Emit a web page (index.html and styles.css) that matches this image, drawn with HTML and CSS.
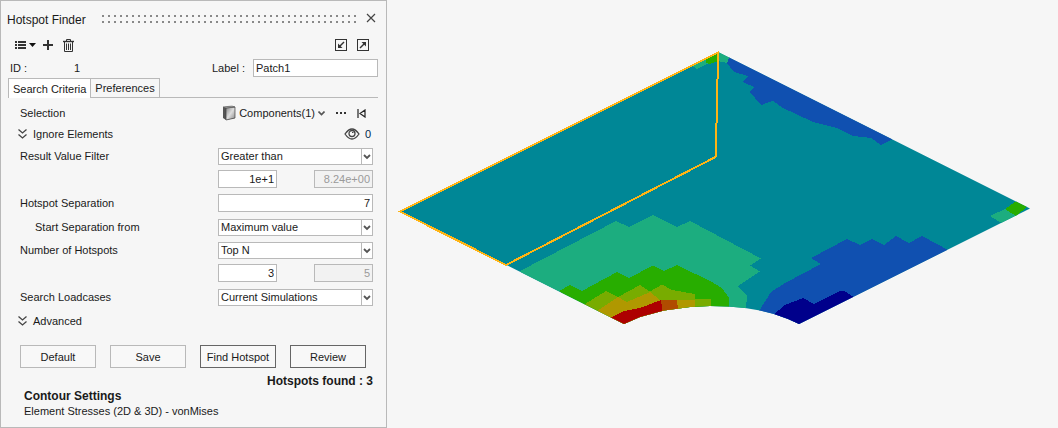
FILE: index.html
```html
<!DOCTYPE html>
<html lang="en">
<head>
  <meta charset="UTF-8" />
  <meta name="viewport" content="width=device-width, initial-scale=1.0"/>
  <title>Hotspot Finder</title>
  <link rel="stylesheet" href="styles.css">
</head>
<body>

  <form class="panel">
    <div class="title-bar">
      <h1>Hotspot Finder</h1>
      <div class="grip"></div>
      <button type="button" class="icon-btn" aria-label="Close">
        <svg width="10" height="10" viewBox="0 0 10 10"><path d="M1 1L9 9M9 1L1 9" stroke="#444" stroke-width="1.2"/></svg>
      </button>
    </div>

    <div class="toolbar">
      <button type="button" class="icon-btn" aria-label="List">
        <svg width="22" height="12" viewBox="0 0 22 12" fill="#333">
          <path d="M0 2h2v2H0zM3 2h8v2H3zM0 5h2v2H0zM3 5h8v2H3zM0 8h2v2H0zM3 8h8v2H3z"/>
          <path d="M14 4h7l-3.5 4z" fill="#111"/>
        </svg>
      </button>
      <button type="button" class="icon-btn" aria-label="Add">
        <svg width="10" height="10" viewBox="0 0 10 10" fill="#333"><path d="M4 0h2v4h4v2H6v4H4V6H0V4h4z"/></svg>
      </button>
      <button type="button" class="icon-btn" aria-label="Delete">
        <svg width="11" height="13" viewBox="0 0 11 13" fill="none" stroke="#333">
          <path d="M3.5 2V.5h4V2"/><path d="M0 2.5h11" stroke-width="1.4"/>
          <path d="M1.5 3v9.5h8V3M3.5 4.5V11M5.5 4.5V11M7.5 4.5V11"/>
        </svg>
      </button>
      <span class="spacer"></span>
      <button type="button" class="icon-btn" aria-label="Collapse">
        <svg width="12" height="12" viewBox="0 0 12 12" fill="none" stroke="#333">
          <rect x=".5" y=".5" width="11" height="11"/><path d="M9 3L4 8" stroke-width="1.5"/><path d="M3 4.5V9h4.5z" fill="#333" stroke="none"/>
        </svg>
      </button>
      <button type="button" class="icon-btn" aria-label="Expand">
        <svg width="12" height="12" viewBox="0 0 12 12" fill="none" stroke="#333">
          <rect x=".5" y=".5" width="11" height="11"/><path d="M3 9L8 4" stroke-width="1.5"/><path d="M4.5 3H9v4.5z" fill="#333" stroke="none"/>
        </svg>
      </button>
    </div>

    <div class="patch-row">
      <span class="patch-key">ID :</span>
      <span class="patch-id">1</span>
      <label for="patchLabel">Label :</label>
      <input type="text" id="patchLabel" value="Patch1">
    </div>

    <div class="tabs" role="tablist">
      <button type="button" class="tab active" role="tab" aria-selected="true">Search Criteria</button>
      <button type="button" class="tab" role="tab" aria-selected="false">Preferences</button>
    </div>

    <div class="criteria">
      <div class="row selection">
        <span>Selection</span>
        <div class="picker">
          <button type="button" class="icon-btn components">
            <svg width="14" height="16" viewBox="0 0 14 16">
              <defs><linearGradient id="solid" x1="0" x2="1" y2="1"><stop offset="0" stop-color="#888"/><stop offset=".5" stop-color="#ddd"/><stop offset="1" stop-color="#888"/></linearGradient></defs>
              <path d="M1 2l9-1 3 1v11l-9 2-3-2z" fill="#555"/>
              <path d="M4 3l9-1v11l-9 2z" fill="url(#solid)" stroke="#444" stroke-width=".7"/>
              <path d="M1 2l9-1 3 1-9 1z" fill="#aaa" stroke="#555" stroke-width=".5"/>
            </svg>
            Components(1)
            <svg width="7" height="5" viewBox="0 0 7 5"><path d="M.5.5L3.5 3.5L6.5.5" fill="none" stroke="#555" stroke-width="1.6"/></svg>
          </button>
          <button type="button" class="icon-btn" aria-label="More">
            <svg width="10" height="2" viewBox="0 0 10 2" fill="#333"><path d="M0 0h2v2H0zM4 0h2v2H4zM8 0h2v2H8z"/></svg>
          </button>
          <button type="button" class="icon-btn" aria-label="Reset">
            <svg width="9" height="9" viewBox="0 0 9 9" fill="none" stroke="#222" stroke-width="1.2"><path d="M1 0v9M8 1L3 4.5L8 8z"/></svg>
          </button>
        </div>
      </div>

      <div class="row pair">
        <button type="button" class="icon-btn fold">
          <svg width="9" height="10" viewBox="0 0 9 10"><path d="M.5.5l4 3.5l4-3.5M.5 5.5l4 3.5l4-3.5" fill="none" stroke="#444" stroke-width="1.3"/></svg>
          Ignore Elements
        </button>
        <div class="ignored">
          <svg width="16" height="12" viewBox="0 0 16 12" fill="none" stroke="#444" stroke-width="1.3">
            <path d="M1 6Q4.5 1 8 1T15 6Q11.5 11 8 11T1 6z"/><circle cx="8" cy="5.5" r="3"/><path d="M8 4.5h1.5" stroke-width="1"/>
          </svg>
          <span>0</span>
        </div>
      </div>

      <div class="row pair">
        <label for="filter">Result Value Filter</label>
        <select id="filter"><option>Greater than</option></select>
      </div>
      <div class="row values">
        <input type="text" value="1e+1" aria-label="Filter value">
        <input type="text" value="8.24e+00" aria-label="Filter maximum" disabled>
      </div>
      <div class="row">
        <label for="separation">Hotspot Separation</label>
        <input type="text" id="separation" value="7">
      </div>
      <div class="row">
        <label for="startFrom" class="sub">Start Separation from</label>
        <select id="startFrom"><option>Maximum value</option></select>
      </div>
      <div class="row pair">
        <label for="count">Number of Hotspots</label>
        <select id="count"><option>Top N</option></select>
      </div>
      <div class="row values">
        <input type="text" value="3" aria-label="Hotspot count">
        <input type="text" value="5" aria-label="Hotspot maximum" disabled>
      </div>
      <div class="row">
        <label for="loadcases">Search Loadcases</label>
        <select id="loadcases"><option>Current Simulations</option></select>
      </div>
      <div class="row">
        <button type="button" class="icon-btn fold">
          <svg width="9" height="10" viewBox="0 0 9 10"><path d="M.5.5l4 3.5l4-3.5M.5 5.5l4 3.5l4-3.5" fill="none" stroke="#444" stroke-width="1.3"/></svg>
          Advanced
        </button>
      </div>
    </div>

    <div class="actions">
      <button type="button">Default</button>
      <button type="button">Save</button>
      <button type="button" class="strong">Find Hotspot</button>
      <button type="button" class="strong">Review</button>
    </div>

    <p class="found">Hotspots found : 3</p>
    <div class="contour">
      <h2>Contour Settings</h2>
      <p>Element Stresses (2D &amp; 3D) - vonMises</p>
    </div>
  </form>

  <main class="viewport">
    <svg class="model" viewBox="387 0 671 428" role="img" aria-label="Stress contour" shape-rendering="crispEdges">
      <defs>
        <clipPath id="plate">
          <path d="M400 211.5L718 52L1030 208.5L799 324L788 319L774 314L760 310.5L745 308L728 306.5L710 306L690 307L664 310.5L640 317L624 324z"/>
        </clipPath>
      </defs>
      <g clip-path="url(#plate)">
        <rect x="390" y="40" width="650" height="300" fill="#008796"/>
        <!-- light green bands -->
        <g fill="#1cad7f">
          <path d="M520 271L616 221L629 227L653 215L677 227L690 221L761 258.5L750 265.5L760 271.5L738 286L747 296L744 330H600L540 300z"/>
          <path d="M690 64L697 69L707 64L718 61L727 63L732 56L718 45z"/>
          <path d="M990 216L1005 209L1018 215L1003 224z"/>
        </g>
        <g fill="#28ad00">
          <path d="M559 291L570 285L582 291L617 272L629 278L653 265.5L664 271L677 265L712 282L722 288L729 298L728 330H600z"/>
          <path d="M706 58V63L709 64L718 61V50z"/>
          <path d="M1005 209L1018 200H1035L1016 216z"/>
        </g>
        <path fill="#78ac00" d="M584 304.5L606 291L618 297L640 285L650 291.5L662 284.5L672 290L695 294V299H711V330H600z"/>
        <path fill="#b09800" d="M597 311L618 297L627 302L650 292L660 300H695V330H610z"/>
        <path fill="#b04c00" d="M660 300H677L680 330H664z"/>
        <path fill="#ad0000" d="M611 317.5L624 311L640 308L661 300L665 330H620z"/>
        <g fill="#1050b0">
          <path d="M759 311L771 292L785 283L821 264L811 258L847 239L860 245L872 239L884 245L896 236L909 243L922 236L950 251L799 330L755 325z"/>
          <path d="M730 56L727 63L734 72L748 76L743 82L754 87L750 92L761 105L773 101L783 108L794 113L813 122L837 128L853 136L871 138L881 145L895 138z"/>
        </g>
        <path fill="#00008b" d="M773 315L785 305L803 298L814 304L840 291L845 291.5L855 298L799 330z"/>
      </g>
      <path d="M400 211.5L718 52.5L717 107L715.5 157L506 265z" fill="none" stroke="#ffb414" stroke-width="2"/>
    </svg>
  </main>

</body>
</html>
```
FILE: styles.css
```css
* {
  box-sizing: border-box;
}

body {
  margin: 0;
  min-height: 100vh;
  display: flex;
  background: #f6f6f6;
  color: #1a1a1a;
  font-family: "Liberation Sans", Arial, sans-serif;
  font-size: 11px;
  line-height: 14px;
}

h1, h2, p {
  margin: 0;
}

button, input, select {
  font: inherit;
  color: inherit;
}

svg {
  display: block;
  flex: none;
}

.panel {
  flex: 0 0 387px;
  border: 1px solid #b9b9b9;
}

.icon-btn {
  display: flex;
  align-items: center;
  padding: 0;
  border: none;
  background: none;
}

.title-bar {
  display: flex;
  align-items: center;
  height: 34px;
  padding: 0 10px 0 6px;
}

.title-bar h1 {
  width: 95px;
  padding-top: 4px;
  font-size: 12px;
  font-weight: normal;
}

.grip {
  flex: 1;
  height: 8px;
  margin: 2px 9px 0 0;
  background: url("data:image/svg+xml,%3Csvg xmlns='http://www.w3.org/2000/svg' width='6' height='6'%3E%3Crect width='2' height='2' fill='%23888'/%3E%3C/svg%3E");
}

.toolbar {
  display: flex;
  align-items: center;
  gap: 10px;
  height: 20px;
  padding: 0 17px 0 14px;
}

.toolbar .icon-btn:nth-child(2) {
  margin-left: -4px;
}

.toolbar .spacer {
  flex: 1;
}

.patch-row {
  display: flex;
  align-items: center;
  height: 20px;
  margin-top: 3px;
  padding: 0 8px 0 9px;
}

.patch-key {
  width: 64px;
}

.patch-id {
  flex: 1;
}

.patch-row label {
  width: 41px;
}

.patch-row input {
  width: 125px;
}

input[type="text"] {
  height: 18px;
  padding: 0 2px;
  border: 1px solid #b9b9b9;
  background: #fff;
}

.tabs {
  display: flex;
  margin: 0 8px 0 7px;
  border-bottom: 1px solid #b9b9b9;
}

.tab {
  height: 19px;
  padding: 0 4px;
  border: 1px solid #b9b9b9;
  border-left: none;
  border-bottom: none;
  background: #f6f6f6;
}

.tab.active {
  height: 20px;
  margin-bottom: -1px;
  border-left: 1px solid #b9b9b9;
  background: #fff;
}

.criteria {
  padding: 5px 13px 0 19px;
}

.row {
  display: flex;
  align-items: center;
  justify-content: space-between;
  height: 24px;
}

.row.pair {
  height: 22px;
}

.row.selection {
  height: 20px;
}

.row > select,
.row > input {
  width: 155px;
}

.row .sub {
  padding-left: 15px;
}

.row.values {
  justify-content: flex-end;
  gap: 37px;
}

.row.values input {
  width: 59px;
}

.criteria input {
  text-align: right;
}

input[type="text"]:disabled {
  background: #f2f2f2;
  color: #9a9a9a;
}

select {
  appearance: none;
  height: 17px;
  padding: 0 2px;
  border: 1px solid #b9b9b9;
  border-radius: 0;
  background: #fff url("data:image/svg+xml,%3Csvg xmlns='http://www.w3.org/2000/svg' width='11' height='15'%3E%3Crect width='1' height='15' fill='%23b9b9b9'/%3E%3Cpath d='M3 6l3 3l3-3' fill='none' stroke='%23555' stroke-width='1.8'/%3E%3C/svg%3E") no-repeat right center;
}

.picker {
  display: flex;
  align-items: center;
  gap: 11px;
  padding-right: 7px;
}

.components {
  gap: 3px;
}

.fold {
  gap: 6px;
  margin-left: -2px;
}

.ignored {
  display: flex;
  align-items: center;
  gap: 5px;
  padding-right: 2px;
}

.ignored span {
  color: #00284d;
}

.actions {
  display: flex;
  gap: 14px;
  padding: 12px 20px 0 19px;
}

.actions button {
  flex: 1;
  height: 23px;
  padding: 0;
  border: 1px solid #b9b9b9;
  background: #f8f8f8;
}

.actions .strong {
  border-color: #666;
}

.found {
  padding: 6px 13px 0 0;
  text-align: right;
  font-size: 12px;
  font-weight: bold;
}

.contour {
  padding: 1px 0 0 23px;
}

.contour h2 {
  font-size: 12px;
  line-height: 15px;
}

.viewport {
  flex: 1;
  min-width: 0;
}

.model {
  width: 100%;
  height: auto;
}
```
